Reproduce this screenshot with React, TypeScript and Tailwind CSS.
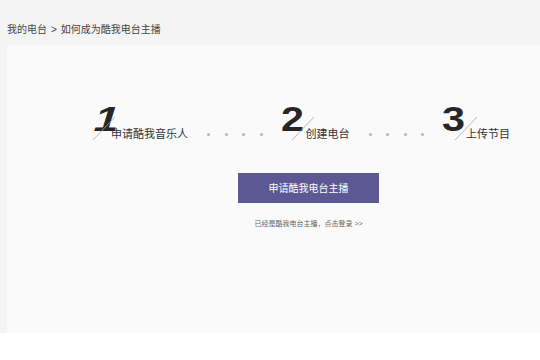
// "How to become a host" page: breadcrumb, three-step guide, apply button.

const FONT = '[font-family:"Liberation_Sans","Noto_Sans_CJK_SC",sans-serif]'

type Step = { n: string; label: string; box: string; text: string; slash: string; digit: string }
const STEPS: Step[] = [
  { n: '1', label: '申请酷我音乐人', box: 'w-[21px]', text: 'w-[77px]', slash: 'left-[3px]', digit: 'scale-x-[1.25] -skew-x-[14deg]' },
  { n: '2', label: '创建电台', box: 'w-[25px]', text: 'w-[44px]', slash: 'left-[11px]', digit: 'scale-x-[1.18]' },
  { n: '3', label: '上传节目', box: 'w-[24px]', text: 'w-[44px]', slash: 'left-[13px]', digit: 'scale-x-[1.18]' },
]

function Dots() {
  return (
    <div className="ml-[19px] mr-[18px] flex items-center gap-[14.5px] self-end pb-[4px]">
      {[0, 1, 2, 3].map((i) => (
        <span key={i} className="h-[3px] w-[3px] rounded-full bg-[#b5b5b5]" />
      ))}
    </div>
  )
}

function StepItem({ step }: { step: Step }) {
  return (
    <div className="relative flex items-end">
      <span className={`${step.box} mb-[4px] inline-block h-[34px] text-[35px] leading-[34px] font-bold text-[#262626]`}>
        <span className={`inline-block origin-bottom-left ${step.digit}`}>{step.n}</span>
      </span>
      {/* thin diagonal stroke under the numeral */}
      <svg
        className={`absolute top-[15px] ${step.slash} h-[23px] w-[22px]`}
        viewBox="0 0 22 23"
        aria-hidden
      >
        <line x1="0" y1="23" x2="22" y2="0" stroke="#a8a8a8" strokeWidth="0.8" />
      </svg>
      <span className={`${step.text} whitespace-nowrap text-[11px] leading-[11px] text-[#333]`}>
        {step.label}
      </span>
    </div>
  )
}

export default function App() {
  return (
    <div className={`${FONT} w-[540px] overflow-hidden bg-white`}>
      <div className="flex h-[333px] flex-col bg-[#f4f4f4] pl-[7px]">
        <div className="flex h-[45px] items-start pt-[25px] text-[10px] leading-[10px] text-[#444]">
          我的电台 <span className="mx-[4px]">&gt;</span> 如何成为酷我电台主播
        </div>
        <div className="flex-1 bg-[#fafafa]">
          <div className="ml-[83px] mt-[57px] flex items-end">
            <StepItem step={STEPS[0]} />
            <Dots />
            <StepItem step={STEPS[1]} />
            <Dots />
            <StepItem step={STEPS[2]} />
          </div>
          <div className="ml-[231px] mt-[33px] flex w-[141px] flex-col items-center">
            <button className="flex h-[30px] w-[141px] items-center justify-center bg-[#5c5893] text-[10px] text-white">
              申请酷我电台主播
            </button>
            <p className="mt-[17px] whitespace-nowrap text-[7px] leading-[7px] text-[#666]">
              已经是酷我电台主播，点击登录 &gt;&gt;
            </p>
          </div>
        </div>
      </div>
      <div className="h-[27px] bg-white" />
    </div>
  )
}
